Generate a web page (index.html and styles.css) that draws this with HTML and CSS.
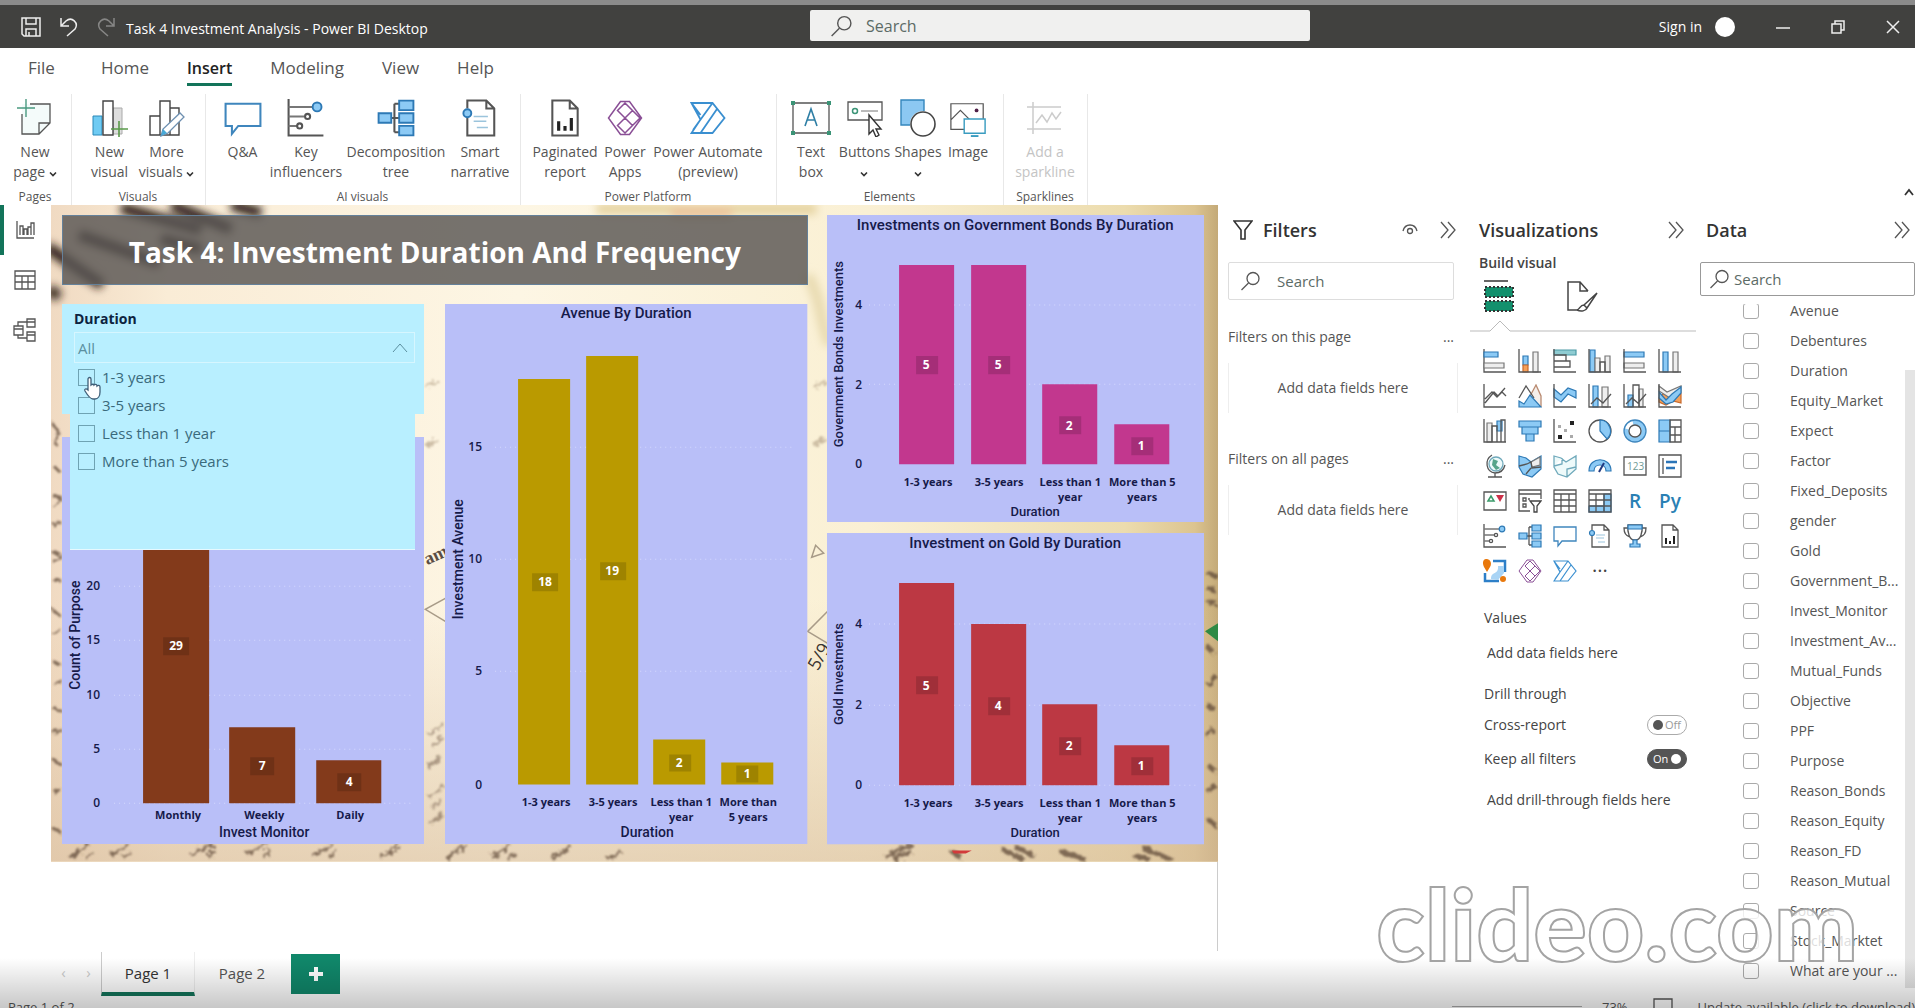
FILE: index.html
```html
<!DOCTYPE html>
<html lang="en">
<head>
<meta charset="utf-8">
<title>Task 4 Investment Analysis - Power BI Desktop</title>
<link rel="stylesheet" href="styles.css">
</head>
<body>
<svg class="defs" aria-hidden="true">
  <symbol id="mag" viewBox="0 0 20 20"><g class="ln"><circle cx="13" cy="7.500" r="6"/><path d="M8.500 12 1.500 19"/></g></symbol>
  <symbol id="more-right" viewBox="0 0 16 18"><path class="ln" d="M1 1l7 8-7 8M8 1l7 8-7 8"/></symbol>
  <symbol id="caret" viewBox="0 0 8 6"><path d="M1 1.500 4 4.500 7 1.500" fill="none" stroke="#333" stroke-width="1.600"/></symbol>
  <symbol id="chat" viewBox="0 0 24 24"><path class="bl" d="M1 3h22v14H9l-4 5v-5H1z"/></symbol>
  <symbol id="influence" viewBox="0 0 24 24"><g class="ln"><path d="M1 0v23h22"/><path d="M1 5h15M1 11h10M1 17h6" stroke="#777"/><circle cx="13" cy="11" r="1.600"/><circle cx="8" cy="17" r="1.600"/></g><circle class="bf" cx="19" cy="5" r="2.800"/></symbol>
  <symbol id="tree" viewBox="0 0 24 24"><path class="ln" d="M8 12h7M11 3v18M11 3h4M11 21h4"/><path class="bf" d="M1 9h8v6H1zM14 1h9v6h-9zM14 9h9v6h-9zM14 17h9v6h-9z"/></symbol>
  <symbol id="narrative" viewBox="0 0 24 24"><path class="ln" d="M4 6V1h12l5 5v17H4V12M16 1v5h5"/><path d="M8 11h9M8 14h8M10 18h7" stroke="#9bc4dc" fill="none"/><circle class="bf" cx="4" cy="9" r="2.500"/></symbol>
  <symbol id="report" viewBox="0 0 24 24"><path class="ln" d="M4 1h11l5 5v17H4zM15 1v5h5"/><path fill="#222" d="M7 14h2v6H7zM11 17h2v3h-2zM15 12h2v8h-2z"/></symbol>
  <symbol id="apps" viewBox="0 0 24 24"><path fill="none" stroke="#8a4f96" stroke-width="1" d="M9 1 1 12l8 11h6l8-11-8-11zM12 2l5 5-5 5-5-5zM12 12l5 5-5 5-5-5zM17 7l5 5-5 5-5-5z"/></symbol>
  <symbol id="automate" viewBox="0 0 24 24"><path fill="#fff" stroke="#3a8fd0" stroke-width="1.200" d="M1 2h14l8 10-8 10H1l6-9zM1 2l6 8M7 22 18 6M2 20 15 2"/></symbol>
</svg>

<header class="titlebar">
  <div class="quick">
    <button aria-label="Save"><svg width="20" height="20" viewBox="0 0 20 20"><path class="wl" d="M1 1h18v18H3l-2-2zM5 1v6h10V1M5 19v-7h10v7M8 15v4"/></svg></button>
    <button aria-label="Undo"><svg width="18" height="20" viewBox="0 0 18 20"><path class="wl" d="M1 1v8h8M1 9l5-5c6-5 13 2 9 8l-8 7"/></svg></button>
    <button aria-label="Redo" class="dim"><svg width="18" height="20" viewBox="0 0 18 20"><path class="wl" d="M17 1v8H9M17 9l-5-5C6-1-1 6 3 12l8 7"/></svg></button>
    <span>Task 4 Investment Analysis - Power BI Desktop</span>
  </div>
  <label class="top-search"><svg width="22" height="22"><use href="#mag"/></svg><input type="text" placeholder="Search" aria-label="Search"></label>
  <div class="account">
    <a href="#">Sign in</a><i class="avatar"></i>
    <button aria-label="Minimize"><svg width="14" height="14"><path class="wl" d="M0 8h14"/></svg></button>
    <button aria-label="Restore"><svg width="14" height="14"><path class="wl" d="M1 4h9v9H1zM4 4V1h9v9h-3"/></svg></button>
    <button aria-label="Close"><svg width="14" height="14"><path class="wl" d="M1 1l12 12M13 1 1 13"/></svg></button>
  </div>
</header>

<nav class="tabs">
  <a href="#" class="t-file">File</a><a href="#">Home</a><a href="#" class="on">Insert</a><a href="#">Modeling</a><a href="#">View</a><a href="#">Help</a>
</nav>

<section class="ribbon">
  <div class="group"><div class="tools">
    <button class="w52"><svg width="36" height="38" viewBox="0 0 36 38"><path d="M5 5h28v20L22 36H5z" fill="#f4fbfa"/><path class="ln" d="M13 5h20v19L22 35H5V15M33 24H22v11"/><path d="M9 0v18M0 9h18" stroke="#4a9a80" stroke-width="1.400"/></svg><span>New<br>page <svg width="8" height="6"><use href="#caret"/></svg></span></button>
  </div><h2>Pages</h2></div>
  <div class="group"><div class="tools">
    <button class="w57"><svg width="36" height="38" viewBox="0 0 36 38"><path fill="#ddd" stroke="#aaa" d="M21 9h9v26h-9z"/><path fill="#6fcbf3" stroke="#2b88b8" d="M1 17h9v19H1z"/><path fill="#fff" stroke="#444" stroke-width="1.400" d="M11 2h10v34H11z"/><path d="M27 22v16M19 30h17" stroke="#5a9a4a" stroke-width="1.600"/></svg><span>New<br>visual</span></button>
    <button class="w57"><svg width="36" height="38" viewBox="0 0 36 38"><path fill="#fff" stroke="#444" stroke-width="1.400" d="M1 17h10v19H1zM21 9h9v27h-9zM11 2h10v34H11z"/><path d="M12 37l2-7 17-16 4 4-16 16z" fill="#fff" stroke="#6d8fb0" stroke-width="1.300"/><path d="M12 37l2-7 4 4z" fill="#45a9d8"/></svg><span>More<br>visuals <svg width="8" height="6"><use href="#caret"/></svg></span></button>
  </div><h2>Visuals</h2></div>
  <div class="group"><div class="tools">
    <button class="w55"><svg width="38" height="38"><use href="#chat"/></svg><span>Q&amp;A</span></button>
    <button class="w72"><svg width="38" height="38"><use href="#influence"/></svg><span>Key<br>influencers</span></button>
    <button class="w108"><svg width="38" height="38"><use href="#tree"/></svg><span>Decomposition<br>tree</span></button>
    <button class="w60"><svg width="38" height="38"><use href="#narrative"/></svg><span>Smart<br>narrative</span></button>
  </div><h2>AI visuals</h2></div>
  <div class="group"><div class="tools">
    <button class="w70"><svg width="38" height="38"><use href="#report"/></svg><span>Paginated<br>report</span></button>
    <button class="w50"><svg width="36" height="38"><use href="#apps"/></svg><span>Power<br>Apps</span></button>
    <button class="w116"><svg width="36" height="38"><use href="#automate"/></svg><span>Power Automate<br>(preview)</span></button>
  </div><h2>Power Platform</h2></div>
  <div class="group"><div class="tools">
    <button class="w50"><svg width="40" height="38" viewBox="0 0 40 38"><path class="ln" d="M2 4h36v30H2z"/><path fill="#3b9477" d="M0 2h4v4H0zM36 2h4v4h-4zM0 32h4v4H0zM36 32h4v4h-4z"/><path fill="none" stroke="#2f7fa5" stroke-width="1.600" d="M14 27l6-17 6 17M16 21h8"/></svg><span>Text<br>box</span></button>
    <button class="w57"><svg width="36" height="38" viewBox="0 0 36 38"><path class="ln" d="M1 3h34v18H1z"/><circle cx="8" cy="12" r="2.500" fill="none" stroke="#3b9477" stroke-width="1.500"/><path d="M14 12h17" stroke="#777"/><path d="M22 16v19l4-4 3 7 3-2-3-6h5z" fill="#fff" stroke="#333" stroke-width="1.400"/></svg><span>Buttons<br><svg width="8" height="6"><use href="#caret"/></svg></span></button>
    <button class="w50"><svg width="36" height="38" viewBox="0 0 36 38"><path fill="#8cc8f2" stroke="#3486bd" stroke-width="1.400" d="M1 1h23v25H1z"/><circle cx="23" cy="25" r="13" fill="#fff"/><circle cx="23" cy="25" r="12" fill="#fff" stroke="#444" stroke-width="1.600"/></svg><span>Shapes<br><svg width="8" height="6"><use href="#caret"/></svg></span></button>
    <button class="w50"><svg width="38" height="40" viewBox="0 0 38 40"><path class="ln" d="M1 5h34v27H1zM1 22l10-10 10 10"/><circle cx="28" cy="12" r="2" fill="#502048"/><path d="M15 21h22v15H15z" fill="#fff" stroke="#3a9cc0" stroke-width="1.500"/><path d="M22 39h8" stroke="#3a9cc0" stroke-width="2"/></svg><span>Image</span></button>
  </div><h2>Elements</h2></div>
  <div class="group off"><div class="tools">
    <button class="w64" disabled><svg width="36" height="38" viewBox="0 0 36 38"><path fill="none" stroke="#ccc" stroke-width="1.500" d="M6 3v32M0 8h34M0 30h34M9 24l6-8 5 7 5-9 4 6 5-7"/></svg><span>Add a<br>sparkline</span></button>
  </div><h2>Sparklines</h2></div>
  <button class="collapse" aria-label="Collapse ribbon"><svg width="10" height="8"><path d="M1 7l4-5 4 5" fill="none" stroke="#333" stroke-width="1.800"/></svg></button>
</section>

<main class="work">
  <nav class="rail">
    <button class="on" aria-label="Report view"><svg width="20" height="20"><path class="ln" d="M2 1v17h17M5 15V6h3v9M9 15V9h3v6M13 15V7h3v8M16 15V3h3v12"/></svg></button>
    <button aria-label="Data view"><svg width="22" height="20"><path class="ln" d="M1 1h20v18H1zM1 6h20M1 12h20M8 6v13M14 6v13"/></svg></button>
    <button aria-label="Model view"><svg width="24" height="24"><path class="ln" d="M1 8h9v9H1zM14 1h8v8h-8zM14 14h8v9h-8zM1 11h9M14 4h8M14 17h8M5 8V4h9M5 17v3h9"/></svg></button>
  </nav>

  <div class="report">
    <div class="canvas">
      <svg class="photo" viewBox="0 0 1166 656" preserveAspectRatio="none" aria-hidden="true">
        <defs>
          <linearGradient id="paper" x1="0" y1="0" x2="1" y2="0"><stop offset="0" stop-color="#f0dac2"/><stop offset=".1" stop-color="#faecd6"/><stop offset=".4" stop-color="#fdf6e4"/><stop offset=".7" stop-color="#faf0d4"/><stop offset=".92" stop-color="#ecdcae"/><stop offset=".98" stop-color="#dcc490"/><stop offset="1" stop-color="#c4aa78"/></linearGradient>
          <linearGradient id="foot" x1="0" y1="0" x2="0" y2="1"><stop offset=".6" stop-color="#e2c8a4" stop-opacity="0"/><stop offset="1" stop-color="#d8bd9c" stop-opacity=".6"/></linearGradient>
          <filter id="soft"><feGaussianBlur stdDeviation="4"/></filter>
          <filter id="fine"><feTurbulence type="fractalNoise" baseFrequency=".18" numOctaves="2" seed="4"/><feDisplacementMap in="SourceGraphic" scale="9"/><feGaussianBlur stdDeviation="1"/></filter>
        </defs>
        <rect width="1166" height="656" fill="url(#paper)"/><rect width="1166" height="656" fill="url(#foot)"/>
        <g filter="url(#soft)" fill="none" stroke="#2a1c14" stroke-width="11">
          <path d="M70 3l80 22M120 0l60 24M180 0l30 8"/><path d="M28 30l80 28M-4 42l55 38M110 34l40 10"/><path d="M-2 84l10 8"/>
          <path d="M545 4h220" stroke="#e5d3a0"/><path d="M620 8h60" stroke="#ecc49c"/>
          <path d="M756 70c16 30 10 40 22 70" stroke="#e8dab0"/>
        </g>
        <g filter="url(#fine)" fill="none" stroke="#5f4838" stroke-width="3" opacity=".75">
          <path d="M1 218l7 10-4 12M2 260l8 8M1 290l9 3-7 9M2 320l8-3M1 346l8 4-6 8M2 374l8 2M1 404l8 6M3 430l7-6M2 456l8 4M4 480l6-6M1 502l10 4M2 528l8-4M2 554l8 5M3 588l6-5M1 622l9 5"/>
          <path d="M18 652l20-13m4 8-8 5M60 650l18-11m2 8-8 4M140 650l22-12m2 8-8 4M196 649l20-11M212 652l7-8M262 651l20-13M278 652l8-7M330 653l18-14M395 653l20-14M440 652l20-12M456 654l8-6M500 653l20-12M556 654l14-8"/>
          <path d="M378 530l14-12M380 540l12-8M376 562l14-10M378 592l14-12M380 602l10-8M378 618l14-10" opacity=".7"/>
          <path d="M834 652l26-14M842 654l18-8M900 646l10 6M950 644l22 10M962 641l20 9M1008 646l26 8M1090 642l30 12M1082 650l16 4" stroke-width="5"/>
          <path d="M1156 368l9 3M1154 382l10 3M1156 396l9 2M1154 440l8 8M1156 480l8-10M1155 500l9 4M1154 530l8-6M1156 560l8 6M1155 586l9-6M1156 614l8 6" stroke-width="5"/>
          <path d="M762 182l12-6M762 240l12-7M374 182l14-5M374 240l12-5" stroke="#b8a68c"/>
        </g>
        <path d="M900 645h20l-6 3h-12z" fill="#d23a3a"/><path d="M1153 426l13-8v18z" fill="#2f8a45"/>
        <path d="M394 393l-20 11 20 12M776 406l-20 20 20 12M764 340l-4 12 12-4z" fill="none" stroke="#a89b88" stroke-width="1.500"/>
        <g fill="#5a4d44" font-family="Liberation Serif, serif" font-weight="700" font-size="18"><text transform="translate(376 360) rotate(-25)">am</text></g>
        <g fill="#3a342e" font-family="Open Sans, sans-serif" font-size="18"><text transform="translate(766 466) rotate(-60)">5/9</text></g>
      </svg>
      <div class="left">
        <h1>Task 4: Investment Duration And Frequency</h1>
        <div class="pair">
          <div class="stack">
            <section class="slicer">
              <h3>Duration</h3>
              <button class="pick">All<svg width="16" height="10"><path d="M1 9l7-8 7 8" fill="none" stroke="#5b8fa0"/></svg></button>
              <div class="menu">
                <label><input type="checkbox">1-3 years</label>
                <label><input type="checkbox">3-5 years</label>
                <label><input type="checkbox">Less than 1 year</label>
                <label><input type="checkbox">More than 5 years</label>
                <svg class="hand" width="22" height="24" viewBox="0 0 22 24"><path d="M6 13V3c0-2 3-2 3 0v6c1-1 3-1 3 0 1-1 3-1 3 1 1-1 3-1 3 1v5c0 4-2 7-5 7h-2c-3 0-5-3-8-8-1-2 1-3 3-1z" fill="#fff" stroke="#3f5f78" stroke-width="1.300"/></svg>
              </div>
            </section>
            <svg class="chart" viewBox="0 0 362 407">
              <rect width="362" height="407" class="panel"/>
              <path class="gridline" d="M52 149h298M52 203h298M52 258h298M52 312h298M52 366h298"/>
              <g fill="#833a1b"><path d="M81 51h66v315H81zM167 290h66v76h-66zM254 323h65v43h-65z"/></g>
              <g class="chip"><path d="M101 200h26v18h-26zM188 320h24v18h-24zM275 336h24v18h-24z"/></g>
              <g class="val"><text x="114" y="213">29</text><text x="200" y="333">7</text><text x="287" y="349">4</text></g>
              <g class="tick"><text x="38" y="153">20</text><text x="38" y="207">15</text><text x="38" y="262">10</text><text x="38" y="316">5</text><text x="38" y="370">0</text></g>
              <g class="cat"><text x="116" y="382">Monthly</text><text x="202" y="382">Weekly</text><text x="288" y="382">Daily</text></g>
              <text class="axis" x="202" y="400">Invest Monitor</text><text class="axis" transform="translate(18 198) rotate(-90)">Count of Purpose</text>
            </svg>
          </div>
          <svg class="chart" viewBox="0 0 362 540">
            <rect width="362" height="540" class="panel"/>
            <path class="gridline" d="M50 143h300M50 255h300M50 367h300"/>
            <g fill="#ba9a00"><path d="M73 75h52v405H73zM141 52h52v428h-52zM208 435h52v45h-52zM276 458h52v22h-52z"/></g>
            <g class="chip"><path d="M87 269h26v18H87zM155 258h26v18h-26zM224 450h22v17h-22zM291 461h22v17h-22z"/></g>
            <g class="val"><text x="100" y="282">18</text><text x="167" y="271">19</text><text x="234" y="463">2</text><text x="302" y="474">1</text></g>
            <g class="tick"><text x="37" y="147">15</text><text x="37" y="259">10</text><text x="37" y="371">5</text><text x="37" y="485">0</text></g>
            <g class="cat"><text x="101" y="502">1-3 years</text><text x="168" y="502">3-5 years</text><text x="236" y="502">Less than 1</text><text x="236" y="517">year</text><text x="303" y="502">More than</text><text x="303" y="517">5 years</text></g>
            <text class="head" x="181" y="14">Avenue By Duration</text><text class="axis" x="202" y="533">Duration</text><text class="axis" transform="translate(18 255) rotate(-90)">Investment Avenue</text>
          </svg>
        </div>
      </div>
      <div class="right">
        <svg class="chart" viewBox="0 0 377 307">
          <rect width="377" height="307" class="panel"/>
          <path class="gridline" d="M42 90h328M42 169h328"/>
          <g fill="#c2378e"><path d="M72 50h55v199H72zM144 50h55v199h-55zM215 169h55v80h-55zM287 209h55v40h-55z"/></g>
          <g class="chip"><path d="M89 141h22v18H89zM161 141h22v18h-22zM232 201h22v18h-22zM304 222h22v18h-22z"/></g>
          <g class="val"><text x="99" y="154">5</text><text x="171" y="154">5</text><text x="242" y="215">2</text><text x="314" y="235">1</text></g>
          <g class="tick"><text x="35" y="94">4</text><text x="35" y="174">2</text><text x="35" y="253">0</text></g>
          <g class="cat"><text x="101" y="271">1-3 years</text><text x="172" y="271">3-5 years</text><text x="243" y="271">Less than 1</text><text x="243" y="286">year</text><text x="315" y="271">More than 5</text><text x="315" y="286">years</text></g>
          <text class="head" x="188" y="15">Investments on Government Bonds By Duration</text><text class="axis small" x="208" y="301">Duration</text><text class="axis small" transform="translate(16 139) rotate(-90)">Government Bonds Investments</text>
        </svg>
        <svg class="chart" viewBox="0 0 377 311">
          <rect width="377" height="311" class="panel"/>
          <path class="gridline" d="M42 91h328M42 172h328M42 252h328"/>
          <g fill="#bc3843"><path d="M72 50h55v202H72zM144 91h55v161h-55zM215 171h55v81h-55zM287 212h55v40h-55z"/></g>
          <g class="chip"><path d="M89 143h22v18H89zM161 164h22v18h-22zM232 204h22v18h-22zM304 224h22v18h-22z"/></g>
          <g class="val"><text x="99" y="157">5</text><text x="171" y="177">4</text><text x="242" y="217">2</text><text x="314" y="237">1</text></g>
          <g class="tick"><text x="35" y="95">4</text><text x="35" y="176">2</text><text x="35" y="256">0</text></g>
          <g class="cat"><text x="101" y="274">1-3 years</text><text x="172" y="274">3-5 years</text><text x="243" y="274">Less than 1</text><text x="243" y="289">year</text><text x="315" y="274">More than 5</text><text x="315" y="289">years</text></g>
          <text class="head" x="188" y="15">Investment on Gold By Duration</text><text class="axis small" x="208" y="304">Duration</text><text class="axis small" transform="translate(16 141) rotate(-90)">Gold Investments</text>
        </svg>
      </div>
    </div>
    <div class="void"></div>
    <nav class="pages">
      <button class="step" aria-label="Previous page">‹</button><button class="step" aria-label="Next page">›</button>
      <a href="#" class="on">Page 1</a><a href="#">Page 2</a>
      <button class="add" aria-label="New page"><svg width="14" height="14"><path d="M7 0v14M0 7h14" stroke="#fff" stroke-width="4"/></svg></button>
    </nav>
  </div>

  <aside class="filters">
    <header><svg width="20" height="20"><path d="M1 1h18l-7 9v9H8v-9z" fill="none" stroke="#333" stroke-width="1.600"/></svg><h2>Filters</h2>
      <button aria-label="Show or hide"><svg width="16" height="14"><path class="ln" d="M1 8c2-8 12-8 14 0"/><circle class="ln" cx="8" cy="8" r="2.500"/></svg></button>
      <button aria-label="Collapse filters"><svg width="16" height="18"><use href="#more-right"/></svg></button></header>
    <label class="search"><svg width="20" height="20"><use href="#mag"/></svg><input type="text" placeholder="Search" aria-label="Search filters"></label>
    <div class="scope"><h3>Filters on this page<span>...</span></h3><p>Add data fields here</p></div>
    <div class="scope"><h3>Filters on all pages<span>...</span></h3><p>Add data fields here</p></div>
  </aside>

  <aside class="viz">
    <header><h2>Visualizations</h2><button aria-label="Collapse visualizations"><svg width="16" height="18"><use href="#more-right"/></svg></button></header>
    <h3>Build visual</h3>
    <div class="modes">
      <button aria-label="Build visual"><svg width="32" height="33"><path d="M1 1h24" stroke="#666" stroke-width="2"/><path d="M2 7h28v10H2zM2 21h28v10H2z" fill="#13906d" stroke="#333" stroke-width="2" stroke-dasharray="2 2"/></svg></button>
      <button aria-label="Format visual"><svg width="32" height="33"><path d="M12 30H2V2h12l8 9M14 2v9h8M31 13 18 25l3 3zM18 25c-4 0-4 4-7 5 4 2 9 1 10-2" fill="none" stroke="#444" stroke-width="1.500"/></svg></button>
    </div>
    <svg class="notch" height="12" width="226"><path d="M0 11h20l10-10 10 10h186" fill="none" stroke="#bbb"/></svg>
    <div class="gallery">
      <button aria-label="Stacked bar"><svg viewBox="0 0 24 24"><path class="ln" d="M1 0v23h22"/><path class="bf" d="M1 3h14v5H1z"/><path class="gf" d="M1 14h20v5H1z"/></svg></button>
      <button aria-label="Stacked column"><svg viewBox="0 0 24 24"><path class="bf" d="M5 7h5v9H5z"/><path class="of" d="M5 16h5v7H5z"/><path class="gf" d="M15 3h5v20h-5z"/><path class="ln" d="M1 0v23h22"/></svg></button>
      <button aria-label="Clustered bar"><svg viewBox="0 0 24 24"><path class="tf" d="M1 1h22v5H1z"/><path class="ln" d="M1 6h12v6H1M1 12h16v6H1M1 0v23h22"/></svg></button>
      <button aria-label="Clustered column"><svg viewBox="0 0 24 24"><path class="bf" d="M2 1h5v22H2z"/><path class="gf" d="M7 9h5v14H7zM17 7h5v16h-5z"/><path class="ln" d="M12 13h5v10h-5zM1 0v23h22"/></svg></button>
      <button aria-label="Full stacked bar"><svg viewBox="0 0 24 24"><path class="bf" d="M1 3h20v5H1z"/><path class="gf" d="M1 14h20v5H1z"/><path class="ln" d="M1 0v23h22"/></svg></button>
      <button aria-label="Full stacked column"><svg viewBox="0 0 24 24"><path class="bf" d="M5 3h5v20H5z"/><path class="gf" d="M15 3h5v20h-5z"/><path class="ln" d="M1 0v23h22"/></svg></button>

      <button aria-label="Line"><svg viewBox="0 0 24 24"><path class="ln" d="M1 0v23h22M2 15l7-7 5 5 8-9M2 19l9-11 4 4 4-4 4 4"/></svg></button>
      <button aria-label="Area"><svg viewBox="0 0 24 24"><path class="of2" d="M11 14 18 1l5 11v11"/><path class="ln" d="M1 14 8 2l8 12"/><path class="bf" d="M1 23V17l5 3 6-9 11 12z"/></svg></button>
      <button aria-label="Stacked area"><svg viewBox="0 0 24 24"><path class="bf" d="M1 5l7 6 7-7 8 3v7l-8-4-7 8-7-5z"/><path class="ln" d="M1 0v23h22"/></svg></button>
      <button aria-label="Line and stacked column"><svg viewBox="0 0 24 24"><path class="bf" d="M5 2h5v21H5z"/><path class="gf" d="M14 3h6v20h-6z"/><path class="ln" d="M1 0v23h22M3 20l6-6 6 5 8-9"/></svg></button>
      <button aria-label="Line and clustered column"><svg viewBox="0 0 24 24"><path class="bf" d="M5 11h5v12H5z"/><path class="gf" d="M16 5h4v18h-4z"/><path class="ln" d="M10 1h6v22h-6zM1 0v23h22M3 20l6-6 6 5 8-9"/></svg></button>
      <button aria-label="Ribbon"><svg viewBox="0 0 24 24"><path class="of" d="M1 14l6-6 8 6 8-5v10l-8-2-7 4-7-3z"/><path class="gf" d="M1 2l8 6 14-6v6L12 14 1 7z"/><path class="bf" d="M1 8l7 8 6-6 9-7v6l-8 9-7 2-7-6z"/><path class="ln" d="M1 0v23h22"/></svg></button>

      <button aria-label="Waterfall"><svg viewBox="0 0 24 24"><path class="gf" d="M4 4h5v19H4z"/><path class="bf" d="M14 2h5v10h-5z"/><path class="ln" d="M1 0v23h22M9 7h5v16H9zM18 1h4v22h-4z"/></svg></button>
      <button aria-label="Funnel"><svg viewBox="0 0 24 24"><path class="bf" d="M1 2h22v6H1zM4 8h16v7H4zM8 15h8v7H8z"/></svg></button>
      <button aria-label="Scatter"><svg viewBox="0 0 24 24"><path class="ln" d="M1 0v23h22"/><path fill="#222" d="M17 2h4v4h-4zM5 16h4v4H5z"/><path fill="#aaa" d="M5 6h3v3H5zM11 10h3v3h-3zM17 16h3v3h-3z"/></svg></button>
      <button aria-label="Pie"><svg viewBox="0 0 24 24"><circle class="ln" cx="12" cy="12" r="11"/><path class="bf" d="M12 1a11 11 0 0 1 7 19l-7-8z"/></svg></button>
      <button aria-label="Donut"><svg viewBox="0 0 24 24"><circle cx="12" cy="12" r="8.500" fill="none" stroke="#8ccaf5" stroke-width="5"/><path d="M4 10a8 8 0 0 1 6-6" stroke="#fff" stroke-width="4" fill="none"/><circle class="bl" fill-opacity="0" cx="12" cy="12" r="11"/><circle class="ln" cx="12" cy="12" r="6"/></svg></button>
      <button aria-label="Treemap"><svg viewBox="0 0 24 24"><path class="bf" d="M1 1h11v11H1zM1 12h11v11H1z"/><path class="ln" d="M12 1h11v22H12zM12 8h11M12 16h11M17 8v15"/></svg></button>

      <button aria-label="Map"><svg viewBox="0 0 24 24"><circle class="tf2" cx="13" cy="10" r="7"/><path class="ln" d="M9 1c-8 5-6 17 3 18 6 0 9-4 10-8M12 19v4M5 23h14"/><path fill="#57a58a" d="M10 5l5 2-2 4 4 3-4 2-4-5z"/></svg></button>
      <button aria-label="Filled map"><svg viewBox="0 0 24 24"><path class="bf" d="M1 2l7 2 5 4 10-6v13l-9 8-9-3-4-7z"/><path class="gf" d="M13 8l9-5v8l-8 2z"/><path class="ln" d="M1 12l8-2 4-2 1 6 9-1M8 20l5-6"/></svg></button>
      <button aria-label="Shape map"><svg viewBox="0 0 24 24"><path class="tf2" d="M1 2l7 2 5 4 10-6v13l-9 8-9-3-4-7zM1 12l8-2V4M14 23v-8l9-2"/></svg></button>
      <button aria-label="Gauge"><svg viewBox="0 0 24 24"><path class="bf" d="M1 17c0-15 22-15 22 0h-5c0-8-12-8-12 0z"/><path d="M11 18l5-9" stroke="#223a80" stroke-width="2"/></svg></button>
      <button aria-label="Card"><svg viewBox="0 0 24 24"><path class="ln" d="M1 3h22v18H1z"/><text x="4" y="16" font-size="10" fill="#6f9b95">123</text></svg></button>
      <button aria-label="Multi-row card"><svg viewBox="0 0 24 24"><path class="ln" d="M1 1h22v22H1zM5 4v16"/><path d="M8 8h11M8 14h9" stroke="#2b75b8" stroke-width="2.500"/></svg></button>

      <button aria-label="KPI"><svg viewBox="0 0 24 24"><path class="ln" d="M1 3h22v18H1z"/><path d="M5 12l3-5 3 5z" fill="none" stroke="#3b9a6a" stroke-width="1.500"/><path d="M13 6h8l-4 7z" fill="#cc3048"/></svg></button>
      <button aria-label="Slicer"><svg viewBox="0 0 24 24"><path class="ln" d="M12 22H1V1h22v9M1 5h22M5 9h3v3H5zM5 15h3v3H5zM10 10h2"/><path d="M12 12h11l-4 5v6h-3v-6z" fill="#fff" stroke="#444" stroke-width="1.300"/></svg></button>
      <button aria-label="Table"><svg viewBox="0 0 24 24"><path class="ln" d="M1 1h22v22H1zM1 5h22M1 11h22M1 17h22M8 5v18M16 5v18"/></svg></button>
      <button aria-label="Matrix"><svg viewBox="0 0 24 24"><path class="bf" d="M16 5h7v18h-7zM1 17h15v6H1z"/><path class="ln" d="M1 1h22v22H1zM1 5h22M1 11h22M1 17h22M8 5v18M16 5v18"/></svg></button>
      <button class="lang" aria-label="R visual">R</button>
      <button class="lang" aria-label="Python visual">Py</button>

      <button aria-label="Key influencers"><svg><use href="#influence"/></svg></button>
      <button aria-label="Decomposition tree"><svg><use href="#tree"/></svg></button>
      <button aria-label="Q and A"><svg><use href="#chat"/></svg></button>
      <button aria-label="Smart narrative"><svg><use href="#narrative"/></svg></button>
      <button aria-label="Metrics"><svg viewBox="0 0 24 24"><path class="ln" d="M6 4H1c0 6 2 8 6 9M18 4h5c0 6-2 8-6 9M5 1h14c1 8-2 15-6 15h-2C7 16 4 9 5 1z"/><path class="bf" d="M5 1h14v4H5zM10 16h4v4h3v3H7v-3h3z"/></svg></button>
      <button aria-label="Paginated report"><svg><use href="#report"/></svg></button>

      <button aria-label="ArcGIS map"><svg viewBox="0 0 24 24"><path d="M10 2h12v11M2 14v8h14" fill="none" stroke="#2d7fc8" stroke-width="2.500"/><path fill="#a9d4f5" d="M8 20c0-8 8-4 7-13h6v7l-6 7z"/><path fill="#e8780c" d="M3 0c5 0 6 5 4 8l-3 5-3-5C-1 4 0 0 3 0z"/><circle cx="20" cy="20" r="3" fill="#e8780c"/></svg></button>
      <button aria-label="Power Apps"><svg><use href="#apps"/></svg></button>
      <button aria-label="Power Automate"><svg><use href="#automate"/></svg></button>
      <button class="dots" aria-label="More visuals">···</button>
    </div>
    <div class="wells">
      <h4>Values</h4><p>Add data fields here</p>
      <h4>Drill through</h4>
      <label>Cross-report<input type="checkbox" role="switch"><span class="toggle">Off</span></label>
      <label>Keep all filters<input type="checkbox" role="switch" checked><span class="toggle">On</span></label>
      <p>Add drill-through fields here</p>
    </div>
  </aside>

  <aside class="data">
    <header><h2>Data</h2><button aria-label="Collapse data"><svg width="16" height="18"><use href="#more-right"/></svg></button></header>
    <label class="search"><svg width="20" height="20"><use href="#mag"/></svg><input type="text" placeholder="Search" aria-label="Search data"></label>
    <div class="scroll">
      <ul>
        <li><label><input type="checkbox">Avenue</label></li>
        <li><label><input type="checkbox">Debentures</label></li>
        <li><label><input type="checkbox">Duration</label></li>
        <li><label><input type="checkbox">Equity_Market</label></li>
        <li><label><input type="checkbox">Expect</label></li>
        <li><label><input type="checkbox">Factor</label></li>
        <li><label><input type="checkbox">Fixed_Deposits</label></li>
        <li><label><input type="checkbox">gender</label></li>
        <li><label><input type="checkbox">Gold</label></li>
        <li><label><input type="checkbox">Government_B...</label></li>
        <li><label><input type="checkbox">Invest_Monitor</label></li>
        <li><label><input type="checkbox">Investment_Av...</label></li>
        <li><label><input type="checkbox">Mutual_Funds</label></li>
        <li><label><input type="checkbox">Objective</label></li>
        <li><label><input type="checkbox">PPF</label></li>
        <li><label><input type="checkbox">Purpose</label></li>
        <li><label><input type="checkbox">Reason_Bonds</label></li>
        <li><label><input type="checkbox">Reason_Equity</label></li>
        <li><label><input type="checkbox">Reason_FD</label></li>
        <li><label><input type="checkbox">Reason_Mutual</label></li>
        <li><label><input type="checkbox">Source</label></li>
        <li><label><input type="checkbox">Stock_Marktet</label></li>
        <li><label><input type="checkbox">What are your ...</label></li>
      </ul>
      <i class="thumb"></i>
    </div>
  </aside>
</main>

<footer class="status"><span>Page 1 of 2</span><span class="zoom"><i></i>73%</span><svg width="20" height="16"><path class="ln" d="M1 2h18v13H1z"/></svg><span>Update available (click to download)</span></footer>
<div class="shade"></div>
<div class="watermark">clideo.com</div>
</body>
</html>
```
FILE: styles.css
```css
* { box-sizing: border-box; margin: 0; padding: 0; }
html { height: 100%; overflow: hidden; }
body { position: relative; height: 100%; overflow: hidden; display: flex; flex-direction: column; background: #fff; color: #555; font: 14px/20px "Open Sans", "Noto Sans", sans-serif; }
button { background: none; border: 0; font: inherit; color: inherit; }
a { color: inherit; text-decoration: none; }
input { font: inherit; color: inherit; }
svg { flex: none; }
h1, h2, h3, h4 { font-size: 14px; font-weight: 400; }
.defs { position: absolute; width: 0; height: 0; }

/* icon strokes and fills */
.ln { fill: none; stroke: #555; stroke-width: 1.300; }
.wl { fill: none; stroke: #eee; stroke-width: 1.500; }
.bl { fill: #fff; stroke: #3f86bd; stroke-width: 1.300; }
.bf { fill: #8ccaf5; stroke: #2d79b5; stroke-width: 1.200; }
.gf { fill: #eee; stroke: #777; stroke-width: 1.200; }
.tf { fill: #8fccd2; stroke: #4d9aa5; stroke-width: 1.200; }
.tf2 { fill: #eefafa; stroke: #6fa9bb; stroke-width: 1.300; }
.of { fill: #f5a05a; stroke: #c8692a; stroke-width: 1.200; }
.of2 { fill: #f4eeea; stroke: #b98a70; stroke-width: 1.300; }

.titlebar { flex: none; height: 48px; border-top: 5px solid #8b8b8b; background: #41413f; color: #fff; display: grid; grid-template-columns: 810fr 500fr 605fr; align-items: center; }
.quick { display: flex; align-items: center; gap: 19px; padding-left: 21px; height: 43px; }
.quick button, .account button { display: flex; }
.quick span { margin-left: -8px; padding-top: 4px; }
.dim { opacity: .4; }
.top-search { display: flex; align-items: center; gap: 14px; height: 31px; padding-left: 20px; margin-bottom: 2px; background: #f0f0ef; border-radius: 2px; }
.top-search input { border: 0; background: none; outline: 0; flex: 1; min-width: 0; font-size: 16px; }
input::placeholder { color: #5c6b66; opacity: 1; }
.account { display: flex; justify-content: flex-end; align-items: center; padding-right: 15px; }
.avatar { width: 20px; height: 20px; border-radius: 50%; background: #fff; margin-left: 13px; }
.account button { margin-left: 41px; }

.tabs { flex: none; display: flex; gap: 38px; height: 41px; padding: 8px 0 0 28px; font-size: 17px; line-height: 24px; }
.tabs a { height: 30px; }
.tabs .t-file { margin-right: 8px; }
.tabs .on { color: #222; font-size: 16px; font-weight: 600; border-bottom: 3px solid #13745a; }

.ribbon { flex: none; display: flex; height: 116px; padding-top: 5px; position: relative; z-index: 1; }
.group { border-right: 1px solid #e8e8e8; padding: 5px 10px 0 9px; display: flex; flex-direction: column; }
.tools { display: flex; flex: 1; }
.tools button { display: flex; flex-direction: column; align-items: center; gap: 5px; white-space: nowrap; }
.tools > button > svg { height: 38px; }
.tools button span { display: block; width: max-content; text-align: center; }
.group h2 { font-size: 12px; line-height: 16px; text-align: center; white-space: nowrap; margin: 0 -8px; }
.off button { color: #c4c4c4; }
.w50 { width: 50px; } .w52 { width: 52px; } .w55 { width: 55px; } .w57 { width: 57px; } .w60 { width: 60px; }
.w64 { width: 64px; } .w70 { width: 70px; } .w72 { width: 72px; } .w108 { width: 108px; } .w116 { width: 116px; }
.collapse { margin-left: auto; align-self: flex-end; padding: 0 1px 4px 0; }

.work { flex: none; display: flex; align-items: stretch; }
.rail { width: 51px; flex: none; display: flex; flex-direction: column; }
.rail button { height: 50px; display: flex; align-items: center; justify-content: center; border-left: 4px solid transparent; padding-right: 5px; }
.rail .on { border-color: #13745a; }
.report { flex: 1; min-width: 0; display: flex; flex-direction: column; }
.canvas { position: relative; display: flex; gap: 19px; padding: 10px 14px 17px 11px; background: #f8ecd4; }
.photo { position: absolute; inset: 0; width: 100%; height: 100%; }
.left { position: relative; flex: 745 1 0; min-width: 0; display: flex; flex-direction: column; gap: 19px; }
.right { position: relative; flex: 377 1 0; min-width: 0; display: flex; flex-direction: column; gap: 11px; }
.left h1 { height: 70px; display: flex; align-items: center; justify-content: center; padding-top: 4px; background: rgba(92, 88, 86, .84); border: 1px solid #65819a; color: #fff; font-size: 28px; font-weight: 700; white-space: nowrap; }
.pair { display: grid; grid-template-columns: 1fr 1fr; gap: 21px; }
.stack { display: flex; flex-direction: column; gap: 23px; }
.chart { display: block; width: 100%; height: auto; }
.panel { fill: #b9bff8; }
.gridline { stroke: #d5d9fd; stroke-dasharray: 1 4; fill: none; }
.chart text { text-anchor: middle; fill: #161a4a; }
.chip { fill: #000; fill-opacity: .15; }
.chart .val text { fill: #fff; font-size: 12px; font-weight: 700; }
.chart .tick text { text-anchor: end; font-size: 12px; font-weight: 600; }
.cat { font-size: 11px; font-weight: 700; }
.axis { font: 500 14px Roboto, sans-serif; }
.axis.small { font-size: 13px; }
.head { font: 500 15px Roboto, sans-serif; }

.slicer { position: relative; height: 110px; background: #b8efff; padding: 5px 9px 0 12px; z-index: 1; }
.slicer h3 { font-size: 14px; font-weight: 700; color: #0c2340; line-height: 20px; }
.pick { display: flex; justify-content: space-between; align-items: center; width: 100%; height: 31px; margin-top: 3px; padding: 0 6px 0 3px; border: 1px solid #d6f6ff; color: #5b8fa0; font-size: 15px; }
.menu { position: absolute; left: 8px; right: 9px; top: 59px; height: 187px; padding: 0 8px; background: #b8efff; border-bottom: 1px solid #e6f9ff; }
.menu label { display: flex; align-items: center; gap: 7px; height: 28px; font-size: 15px; color: #3a6a7c; }
.menu input { appearance: none; width: 17px; height: 17px; border: 1px solid #6fa3b3; }
.hand { position: absolute; left: 12px; top: 13px; }

.void { height: 89px; border-right: 1px solid #ccc; }
.pages { display: flex; height: 46px; align-items: flex-start; font-size: 15px; padding-top: 1px; }
.step { width: 25px; height: 40px; color: #ccc; }
.pages a { width: 94px; height: 44px; line-height: 42px; text-align: center; }
.pages .on { color: #333; border-left: 1px solid #ccc; border-right: 1px solid #eee; border-bottom: 4px solid #13745a; }
.add { width: 49px; height: 40px; margin: 2px 0 0 2px; background: #10876a; display: flex; align-items: center; justify-content: center; }

aside { flex: none; }
aside header { display: flex; align-items: center; height: 50px; color: #333; }
aside header h2 { font-size: 18px; font-weight: 600; margin-right: auto; }
aside header button { display: flex; }
.search { display: flex; align-items: center; border: 1px solid #ddd; border-radius: 2px; }
.search input { flex: 1; min-width: 0; border: 0; outline: 0; background: none; font-size: 15px; }
.filters { width: 252px; padding-left: 10px; }
.filters header { gap: 10px; padding: 0 14px 0 5px; }
.filters header button + button { margin-left: 12px; }
.filters .search { width: 226px; height: 38px; margin-top: 7px; padding-left: 11px; gap: 17px; }
.scope { margin-top: 27px; height: 95px; width: 230px; }
.scope h3 { display: flex; justify-content: space-between; padding-right: 4px; }
.scope p { height: 50px; line-height: 50px; margin-top: 16px; text-align: center; border: solid #eee; border-width: 0 1px; }
.viz { width: 226px; }
.viz header { padding: 0 12px 0 9px; }
.viz h3 { color: #444; font-weight: 600; padding-left: 9px; height: 25px; line-height: 16px; }
.modes { display: flex; gap: 51px; padding-left: 13px; height: 40px; }
.modes button { display: flex; align-items: flex-start; }
.notch { display: block; width: 100%; }
.gallery { display: grid; grid-template-columns: repeat(6, 35px); grid-auto-rows: 35px; padding: 17px 0 0 13px; }
.gallery button { display: flex; width: 24px; height: 24px; align-items: center; justify-content: center; }
.gallery button svg { width: 24px; height: 24px; }
.gallery .lang { color: #2a80b4; font-size: 19px; font-weight: 600; }
.gallery .dots { color: #444; font-size: 20px; }
.wells { padding: 13px 9px 0 14px; color: #444; }
.wells h4 { height: 22px; line-height: 22px; }
.wells p { height: 34px; line-height: 34px; margin-top: 7px; padding-left: 3px; white-space: nowrap; }
.wells p + h4 { margin-top: 13px; }
.wells label { display: flex; align-items: center; height: 34px; margin-top: 3px; }
.wells label + label { margin-top: 0; }
.wells label + p { margin-top: 7px; }
.wells input { position: absolute; opacity: 0; }
.toggle { margin-left: auto; display: flex; align-items: center; justify-content: space-between; width: 40px; height: 20px; padding: 0 5px; border: 1px solid #aaa; border-radius: 10px; font-size: 11px; color: #999; }
.toggle::before { content: ""; width: 10px; height: 10px; border-radius: 50%; background: #555; }
input:checked + .toggle { background: #555; border-color: #555; color: #fff; flex-direction: row-reverse; }
input:checked + .toggle::before { background: #fff; }
.data { width: 219px; }
.data header { padding: 0 5px 0 10px; }
.data .search { margin: 7px 0 8px 4px; height: 34px; border-color: #999; padding-left: 8px; gap: 5px; }
.scroll { position: relative; overflow: hidden; height: 684px; }
.data ul { list-style: none; margin-top: -8px; }
.data label { display: flex; align-items: center; height: 30px; gap: 31px; padding-left: 47px; white-space: nowrap; }
.data li input { appearance: none; width: 16px; height: 16px; border: 1px solid #aaa; border-radius: 3px; }
.data .search { padding-left: 8px; gap: 5px; }
.thumb { position: absolute; right: 0; top: 66px; width: 10px; height: 618px; background: #e4e4e4; }

.status { flex: none; display: flex; gap: 25px; height: 20px; padding-left: 8px; font-size: 13px; line-height: 20px; white-space: nowrap; }
.zoom { margin-left: auto; display: flex; gap: 20px; align-items: center; }
.zoom i { width: 130px; height: 1px; background: #aaa; }
.shade { position: absolute; left: 0; right: 0; bottom: 0; height: 50px; background: linear-gradient(rgba(0, 0, 0, 0), rgba(0, 0, 0, .22)); pointer-events: none; }
.watermark { position: absolute; right: 57px; bottom: 32px; font: 900 100px/108px Lato, sans-serif; color: rgba(255, 255, 255, .8); -webkit-text-stroke: 2px #a4a4a4; pointer-events: none; }
```
